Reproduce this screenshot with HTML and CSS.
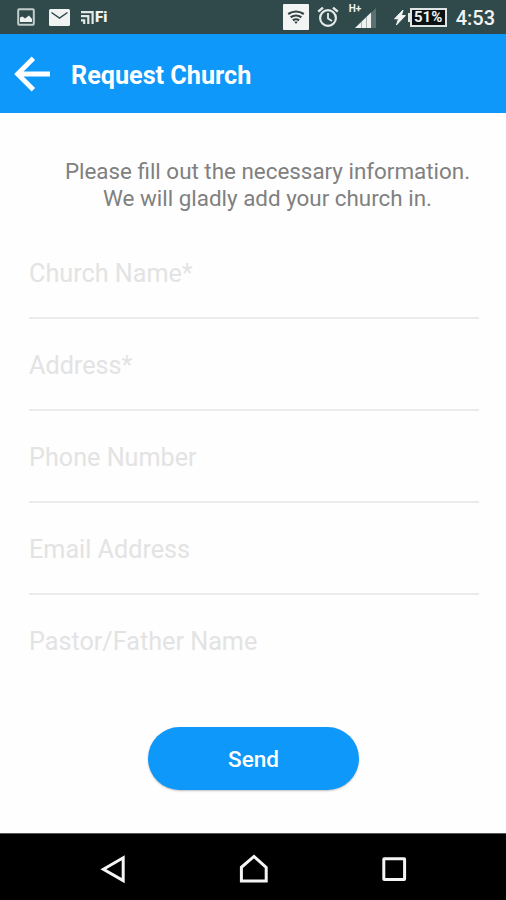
FILE: index.html
```html
<!DOCTYPE html>
<html lang="en">
<head>
  <meta charset="UTF-8">
  <title>Request Church</title>
  <meta name="viewport" content="width=device-width, initial-scale=1.0">
  <link rel="stylesheet" href="styles.css">
</head>
<body>

<!-- Status bar -->
<div class="status-bar">
  <svg class="icon-image" width="18" height="18" viewBox="0 0 18 18">
    <rect x="1.2" y="1.2" width="15.6" height="15.6" rx="1" fill="none" stroke="#c3cdcc" stroke-width="2"/>
    <path d="M3 14V9.5l2.5-1 2.5 2 4-3 3 3.5v3z" fill="#eef2f1"/>
  </svg>
  <svg class="icon-mail" width="21" height="17" viewBox="0 0 21 17">
    <rect width="21" height="17" rx="1.5" fill="#f0f3f2"/>
    <path d="M2.5 3.5l8 5.5 8-5.5" fill="none" stroke="#2f4a4c" stroke-width="1.5"/>
  </svg>
  <div class="mifi">
    <svg width="13" height="13" viewBox="0 0 13 13">
      <path d="M0 1.2h11.6V13M0 5.2h7.3V13M0 9.4h3.2V13" fill="none" stroke="#e3e8e7" stroke-width="2.2"/>
    </svg>
    <span>Fi</span>
  </div>

  <svg class="icon-wifi" width="26" height="26" viewBox="0 0 26 26">
    <rect width="26" height="26" rx="1" fill="#f3f5f5"/>
    <path d="M5.2 10q7.8-5 15.6 0M7.6 13.2q5.4-3.4 10.8 0M9.8 16.2q3.2-1.9 6.4 0" fill="none" stroke="#344244" stroke-width="2.2"/>
    <path d="M11.2 17.6h3.6L13 20z" fill="#344244"/>
  </svg>
  <svg class="icon-alarm" width="22" height="22" viewBox="0 0 22 22" fill="none" stroke="#e6ebea">
    <circle cx="11" cy="12" r="7.9" stroke-width="2.2"/>
    <path d="M1.2 5.6L6 1.6M20.8 5.6L16 1.6" stroke-width="2.4"/>
    <path d="M11 7v5.4l4 2.6" stroke-width="1.8"/>
  </svg>
  <div class="signal">
    <span>H+</span>
    <svg width="21" height="20" viewBox="0 0 21 20">
      <path d="M0 20L21 0v20z" fill="#5b7072"/>
      <path d="M0 20L16 4.6V20z" fill="#eff2f1"/>
      <path d="M6.5 14v6M11.5 9v11" stroke="#a9b5b5" stroke-width="1"/>
    </svg>
  </div>
  <svg class="icon-bolt" width="12" height="15" viewBox="0 0 12 15">
    <path d="M9 0L0.6 8.8h4L2.4 15l9-9.4h-4z" fill="#f3f5f5" stroke="#f3f5f5" stroke-width="1"/>
  </svg>
  <div class="battery"><span>51%</span></div>
  <span class="clock">4:53</span>
</div>

<!-- Title bar -->
<div class="header">
  <svg class="back" width="36" height="36" viewBox="0 0 36 36">
    <path d="M19.4 2.2L3.6 18l15.8 15.8M3.6 18H36" fill="none" stroke="#fff" stroke-width="4.8"/>
  </svg>
  <h1>Request Church</h1>
</div>

<!-- Request form -->
<form class="form">
  <p class="intro">Please fill out the necessary information.<br>We will gladly add your church in.</p>
  <label class="field"><span>Church Name*</span><input type="text" name="church"></label>
  <label class="field"><span>Address*</span><input type="text" name="address"></label>
  <label class="field"><span>Phone Number</span><input type="tel" name="phone"></label>
  <label class="field"><span>Email Address</span><input type="email" name="email"></label>
  <label class="field last"><span>Pastor/Father Name</span><input type="text" name="pastor"></label>
  <button class="send" type="button">Send</button>
</form>

<!-- Navigation bar -->
<div class="nav-bar">
  <svg width="28" height="30" viewBox="0 0 28 30">
    <path d="M4.4 15.2L24.2 3.8v22.8z"/>
  </svg>
  <svg width="30" height="30" viewBox="0 0 30 30">
    <path d="M2.4 27.1V13.3L15 2.4l12.2 10.9v13.8z"/>
  </svg>
  <svg width="28" height="30" viewBox="0 0 28 30">
    <rect x="3.8" y="4.8" width="20.8" height="20.6" rx="0.5"/>
  </svg>
</div>

</body>
</html>
```

FILE: styles.css
```css
body {
  margin: 0;
  height: 900px;
  display: flex;
  flex-direction: column;
  overflow: hidden;
  background: #fefefe;
  font-family: Roboto, 'Liberation Sans', sans-serif;
}

.status-bar {
  display: flex;
  align-items: center;
  height: 34px;
  padding: 0 11px 0 17px;
  box-sizing: border-box;
  background: #304a4c;
  color: #f0f3f2;
}
.status-bar svg { flex: none; }
.icon-image { margin-right: 14px; }
.icon-mail { margin-right: 11px; }
.mifi {
  display: flex;
  align-items: center;
  gap: 1px;
  margin-right: auto;
}
.mifi span {
  font-size: 15px;
  font-weight: 900;
  line-height: 13px;
}
.icon-wifi { margin-right: 8px; }
.icon-alarm { margin-right: 10px; }
.signal {
  display: flex;
  width: 27px;
  height: 26px;
  margin-right: 18px;
}
.signal span {
  width: 6px;
  font-size: 10px;
  font-weight: bold;
  line-height: 10px;
  white-space: nowrap;
}
.signal svg { margin-top: 4px; }
.icon-bolt { margin-right: 2px; }
.battery {
  display: flex;
  align-items: center;
  margin-right: 9px;
}
.battery::before {
  content: "";
  width: 2px;
  height: 9px;
  background: #e6ebea;
}
.battery span {
  width: 37px;
  height: 19px;
  box-sizing: border-box;
  border: 2px solid #dfe5e4;
  background: #0c1213;
  font-size: 15px;
  font-weight: bold;
  line-height: 15px;
  text-align: center;
}
.clock {
  margin-top: 2px;
  font-size: 20px;
  font-weight: 500;
}

.header {
  display: flex;
  align-items: center;
  height: 79px;
  padding-left: 14px;
  background: #0d98fa;
}
.header h1 {
  margin: 4px 0 0 21px;
  color: #fff;
  font-size: 25.2px;
  font-weight: bold;
}

.form {
  flex: 1;
  padding: 45px 27px 0 29px;
}
.intro {
  margin: 0 0 15px 27px;
  color: #808080;
  font-size: 22.4px;
  line-height: 27px;
  text-align: center;
  white-space: nowrap;
}
.field {
  display: flex;
  align-items: center;
  height: 92px;
  padding-top: 2px;
  box-sizing: border-box;
  border-bottom: 2px solid #ebebeb;
}
.field span {
  color: #e3e3e3;
  font-size: 25.2px;
}
.field input {
  flex: 1;
  min-width: 0;
  border: none;
  outline: none;
  background: none;
  font-size: 25px;
}
.last { border-bottom-color: transparent; }
.send {
  display: block;
  width: 211px;
  height: 63px;
  margin: 40px auto 0 119px;
  border: none;
  border-radius: 32px;
  background: #0d98fa;
  box-shadow: 0 1px 2px rgba(0,0,0,0.25);
  color: #fff;
  font-family: inherit;
  font-size: 22.5px;
  font-weight: 500;
}

.nav-bar {
  display: flex;
  justify-content: space-between;
  align-items: center;
  height: 67px;
  padding: 4px 98px 0 99px;
  box-sizing: border-box;
  border-top: 1px solid #555;
  background: #000;
}
.nav-bar svg {
  fill: none;
  stroke: #f5f5f5;
  stroke-width: 3;
}
```
